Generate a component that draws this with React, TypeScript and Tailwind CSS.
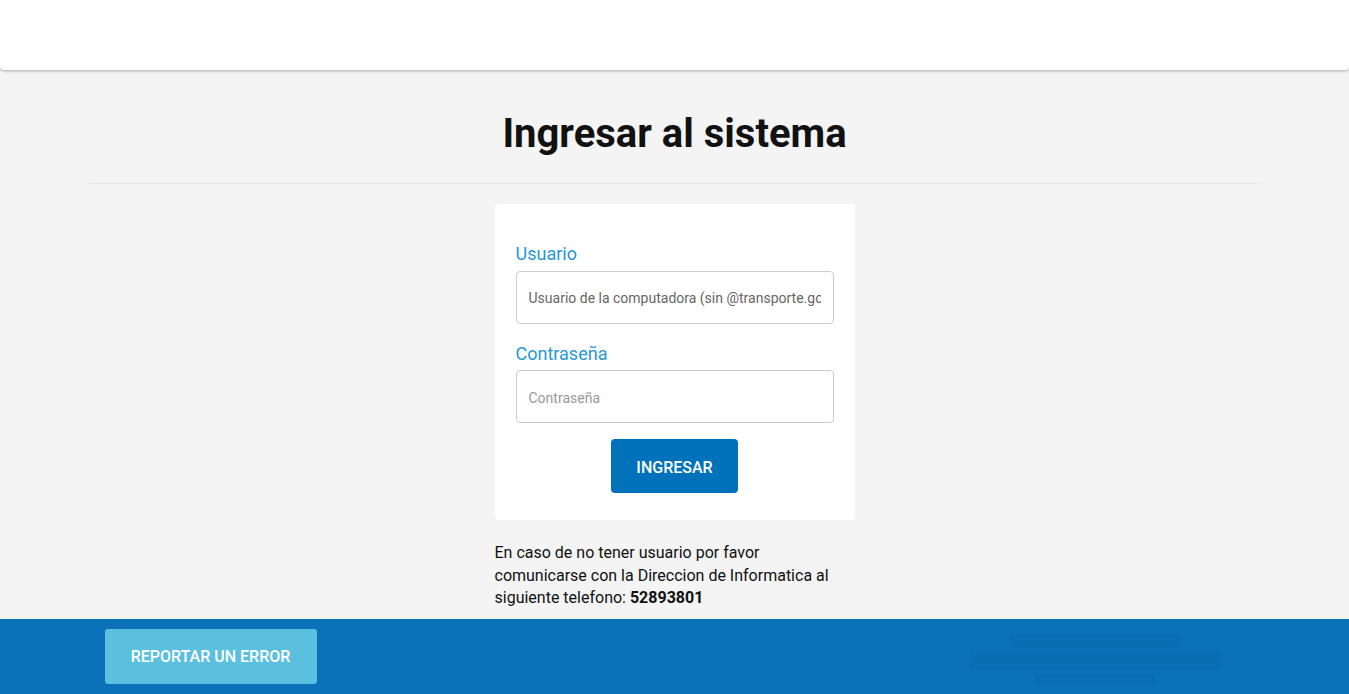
import React from "react";

export default function App() {
  return (
    <div className="min-h-[694px] bg-[#f4f4f4] flex flex-col" style={{ fontFamily: "Roboto, 'Liberation Sans', sans-serif" }}>
      <header className="h-[70px] shrink-0 bg-white rounded-b-[4px] shadow-[0_1px_3px_rgba(0,0,0,0.3)] relative z-10" />
      <main className="flex flex-col items-center">
        <div className="w-[1172px] flex flex-col items-center">
          <h1 className="mt-[42px] text-[40px] leading-[44px] font-bold text-[#111]">Ingresar al sistema</h1>
          <hr className="mt-[27px] w-full border-0 border-t border-[#e6e6e6]" />
          <div className="mt-[20px] w-[360px] bg-white rounded-[4px] px-[21px] pt-[37px] pb-[27px] flex flex-col">
            <label className="text-[18px] leading-[26px] text-[#2897d8] mb-[4px]">Usuario</label>
            <input
              type="text"
              placeholder="Usuario de la computadora (sin @transporte.gob.ar)"
              className="h-[53px] w-full border border-[#cccccc] rounded-[4px] px-[12px] pt-[1px] text-[14px] text-[#555] placeholder:text-[#666] outline-none bg-white"
            />
            <label className="mt-[17px] text-[18px] leading-[26px] text-[#2897d8] mb-[3px]">Contraseña</label>
            <input
              type="password"
              placeholder="Contraseña"
              className="h-[53px] w-full border border-[#cccccc] rounded-[4px] px-[12px] pt-[2px] text-[14px] text-[#555] placeholder:text-[#999] outline-none bg-white"
            />
            <div className="mt-[16px] flex justify-center">
              <button className="w-[127px] h-[54px] pt-[3px] bg-[#0072bb] rounded-[4px] text-white text-[16px] font-medium">INGRESAR</button>
            </div>
          </div>
          <p className="mt-[22px] w-[360px] text-[16px] leading-[22.5px] text-[#111]">
            En caso de no tener usuario por favor comunicarse con la Direccion de Informatica al siguiente telefono:{" "}
            <strong className="font-bold">52893801</strong>
          </p>
        </div>
      </main>
      <footer className="mt-[9px] flex-1 min-h-[75px] bg-[#0b72b9]">
        <div className="w-[1170px] mx-auto px-[15px] pt-[10px] flex items-start justify-between">
          <button className="w-[212px] h-[55px] pt-[1px] bg-[#5bc0de] rounded-[3px] text-white text-[16px] font-medium">REPORTAR UN ERROR</button>
          <div className="mr-[17px] mt-[5px] w-[265px] h-[50px] opacity-[0.025] flex flex-col gap-[4px] items-center">
            <div className="w-[170px] h-[14px] bg-[#000]" />
            <div className="w-[250px] h-[18px] bg-[#000]" />
            <div className="w-[120px] h-[10px] bg-[#000]" />
          </div>
        </div>
      </footer>
    </div>
  );
}
